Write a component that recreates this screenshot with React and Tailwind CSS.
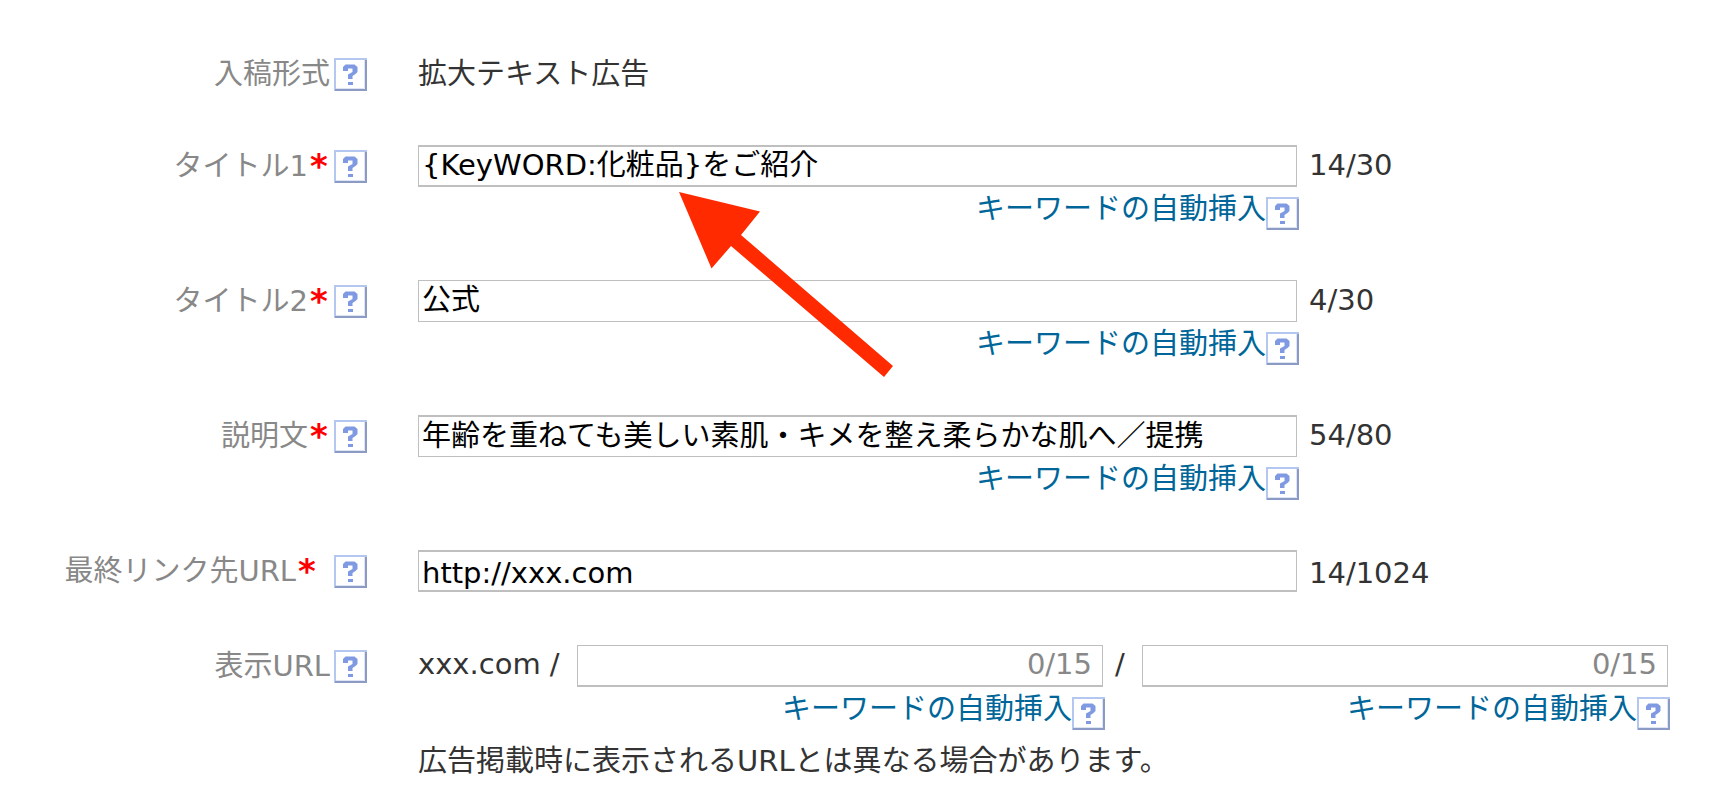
import React, { useState } from 'react'

const INSERT_LABEL = 'キーワードの自動挿入'

const TEXT_ROWS = [
  { id: 'title1', label: 'タイトル1', initial: '{KeyWORD:化粧品}をご紹介', counter: '14/30', insert: true, edge: 'border-y-2' },
  { id: 'title2', label: 'タイトル2', initial: '公式', counter: '4/30', insert: true, edge: 'border-y' },
  { id: 'description', label: '説明文', initial: '年齢を重ねても美しい素肌・キメを整え柔らかな肌へ／提携', counter: '54/80', insert: true, edge: 'border-t-2 border-b' },
  { id: 'finalUrl', label: '最終リンク先URL', initial: 'http://xxx.com', counter: '14/1024', latin: true, edge: 'border-y-2' },
]

function HelpButton({ topic }) {
  return (
    <button type="button" aria-label={`${topic}のヘルプ`} className="block w-[33px] h-[33px] shrink-0">
      <svg viewBox="0 0 33 33" className="block w-full h-full" fill="none">
        <path d="M1 33V1H33" stroke="#b3c7f1" strokeWidth="2" />
        <path d="M32 2V32H1" stroke="#8b9bc4" strokeWidth="2" />
        <path d="M2 30.5H30.5V2" stroke="#dde4f5" strokeWidth="1" />
        <path
          d="M9 13V9L11.500 6.500H20.500L23.500 9V14L21.500 16L18.500 18V21H14V16.500L18.500 14V10.500H14V13Z"
          fill="#7f9ae2"
        />
        <path d="M14 24H19V27H14Z" fill="#7f9ae2" />
      </svg>
    </button>
  )
}

function RowLabel({ htmlFor, text, required, spaced }) {
  return (
    <div className="flex items-center justify-end h-[42px]">
      <label htmlFor={htmlFor} className="flex items-center text-[#888888]">
        {text}
        {required && (
          <span className="w-[22px] h-[38px] text-center text-[34px] font-bold text-[#ff0000]">*</span>
        )}
      </label>
      <span className={spaced ? 'pl-4' : 'pl-1'}>
        <HelpButton topic={text} />
      </span>
    </div>
  )
}

function InsertLink() {
  return (
    <div className="flex items-end justify-end h-[43px] -mr-0.5">
      <a href="#insert" className="pb-0.5 text-[#006699]">{INSERT_LABEL}</a>
      <HelpButton topic={INSERT_LABEL} />
    </div>
  )
}

function TextRow({ row }) {
  const [value, setValue] = useState(row.initial)

  return (
    <div className="grid grid-cols-[367px_minmax(0,1fr)] gap-x-[51px]">
      <RowLabel htmlFor={row.id} text={row.label} required spaced={row.latin} />
      <div className="flex items-start">
        <div className="flex-1 min-w-0">
          <input
            id={row.id}
            type="text"
            value={value}
            onChange={(e) => setValue(e.target.value)}
            className={`block w-full h-[42px] px-[3px] bg-white text-black border-x border-[#bfbfbf] outline-none ${row.edge} ${row.latin ? 'pt-[3px]' : 'pb-2'}`}
          />
          {row.insert && <InsertLink />}
        </div>
        <span className={`w-[371px] h-[42px] pl-3 ${row.latin ? 'pt-1' : 'pt-px'}`}>{row.counter}</span>
      </div>
    </div>
  )
}

function PathField({ id, label }) {
  return (
    <div className="flex-1 min-w-0">
      <input
        id={id}
        type="text"
        aria-label={label}
        placeholder="0/15"
        className="block w-full h-[42px] px-2.5 pb-[3px] bg-white text-right text-black placeholder:text-[#888888] border-x border-t border-b-2 border-[#bfbfbf] outline-none"
      />
      <InsertLink />
    </div>
  )
}

export default function App() {
  return (
    <main className="relative bg-white pt-[53px] pb-6 pr-14 font-['DejaVu_Sans','Noto_Sans_CJK_JP',sans-serif] text-[29px] leading-[38px] text-[#333333]">
      <form className="flex flex-col gap-[50px]">
        <div className="grid grid-cols-[367px_minmax(0,1fr)] gap-x-[51px]">
          <RowLabel text="入稿形式" />
          <span className="pt-0.5">拡大テキスト広告</span>
        </div>

        {TEXT_ROWS.map((row) => (
          <TextRow key={row.id} row={row} />
        ))}

        {/* Display URL */}
        <div className="grid grid-cols-[367px_minmax(0,1fr)] gap-x-[51px] pt-[3px]">
          <RowLabel htmlFor="path1" text="表示URL" />
          <div>
            <div className="flex items-start">
              <span className="w-[159px] shrink-0">xxx.com /</span>
              <PathField id="path1" label="パス1" />
              <span className="w-[39px] shrink-0 pl-3">/</span>
              <PathField id="path2" label="パス2" />
            </div>
            <p className="pt-3">広告掲載時に表示されるURLとは異なる場合があります。</p>
          </div>
        </div>
      </form>

      {/* Arrow pointing at the inserted keyword */}
      <svg
        viewBox="0 0 216 187"
        className="absolute left-[678px] top-[191px] w-[216px] h-[187px] pointer-events-none"
        aria-hidden="true"
      >
        <path d="M1 1L82 20.5L63 44L215 175L206 186L53 55L33.5 77.5Z" fill="#ff2a00" />
      </svg>
    </main>
  )
}
